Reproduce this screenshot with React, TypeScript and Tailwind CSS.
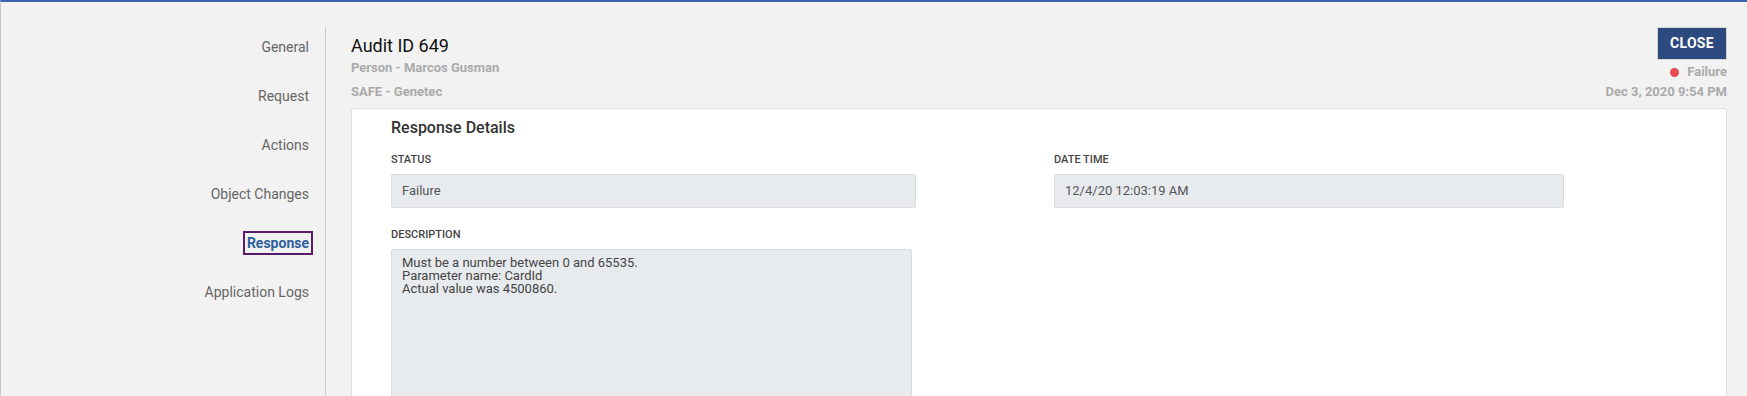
import React from 'react'

const navItems = ['General', 'Request', 'Actions', 'Object Changes', 'Response', 'Application Logs']

const Field = ({ label, value, width }: { label: string; value: string; width: string }) => (
    <div className="flex flex-col">
        <span className="text-[11px] leading-[16px] font-medium uppercase text-[#444]">{label}</span>
        <div
            className={`mt-[6px] h-[34px] rounded-[2px] border border-[#dcdcdc] bg-[#e8ebee] pl-[10px] flex items-center text-[13px] text-[#555] ${width}`}
        >
            {value}
        </div>
    </div>
)

export default function App() {
    const active = 'Response'

    return (
        <div className="h-[396px] w-full overflow-hidden bg-[#f2f2f2] border-t-2 border-[#3f63ad] border-l border-l-[#c8c8c8] font-['Roboto',sans-serif] flex">
            {/* side nav */}
            <nav className="w-[324px] shrink-0 pt-[25px] pr-[16px] flex flex-col items-end gap-[9px]">
                {navItems.map(item => (
                    <div key={item} className="h-[40px] flex items-center">
                        {item === active ? (
                            <span className="-mr-[4px] border-2 border-[#5a1a6a] px-[2px] text-[14px] leading-[20px] font-bold text-[#2c5f9e]">
                                {item}
                            </span>
                        ) : (
                            <span className="text-[14px] leading-[20px] text-[#666]">{item}</span>
                        )}
                    </div>
                ))}
            </nav>

            <div className="mt-[25px] flex-1 border-l border-[#cccccc] pl-[25px] pr-[20px] flex flex-col">
                {/* header */}
                <div className="flex justify-between">
                    <div className="flex flex-col">
                        <h1 className="mt-[8px] text-[18px] leading-[22px] text-[#111]">Audit ID 649</h1>
                        <span className="text-[13px] leading-[22px] font-bold text-[#aaaaaa]">Person - Marcos Gusman</span>
                        <span className="mt-[2px] text-[13px] leading-[22px] font-bold text-[#aaaaaa]">SAFE - Genetec</span>
                    </div>
                    <div className="flex flex-col items-end">
                        <button className="h-[33px] w-[70px] border border-[#d5d5d5] bg-[#2c4a7e] text-white text-[14px] font-bold tracking-[0.3px]">
                            CLOSE
                        </button>
                        <div className="mt-[2px] h-[20px] flex items-center gap-[8px]">
                            <span className="h-[9px] w-[9px] rounded-full bg-[#e84c4f]" />
                            <span className="text-[13px] font-bold text-[#aaaaaa]">Failure</span>
                        </div>
                        <span className="text-[13px] leading-[20px] font-bold text-[#aaaaaa]">Dec 3, 2020 9:54 PM</span>
                    </div>
                </div>

                {/* details card */}
                <div className="mt-[5px] flex-1 rounded-t-[3px] border border-[#e0e0e0] bg-white pl-[39px] pt-[8px]">
                    <h2 className="text-[16px] leading-[22px] font-medium text-[#333]">Response Details</h2>

                    <div className="mt-[13px] flex">
                        <div className="w-[663px] shrink-0">
                            <Field label="Status" value="Failure" width="w-[525px]" />
                        </div>
                        <Field label="Date Time" value="12/4/20 12:03:19 AM" width="w-[510px]" />
                    </div>

                    <div className="mt-[19px] flex flex-col">
                        <span className="text-[11px] leading-[16px] font-medium uppercase text-[#444]">Description</span>
                        <div className="mt-[6px] h-[200px] w-[521px] rounded-[2px] border border-[#dcdcdc] bg-[#e8ebee] pl-[10px] pt-[6px] text-[13px] leading-[13px] text-[#444]">
                            <div>Must be a number between 0 and 65535.</div>
                            <div>Parameter name: CardId</div>
                            <div>Actual value was 4500860.</div>
                        </div>
                    </div>
                </div>
            </div>
        </div>
    )
}
